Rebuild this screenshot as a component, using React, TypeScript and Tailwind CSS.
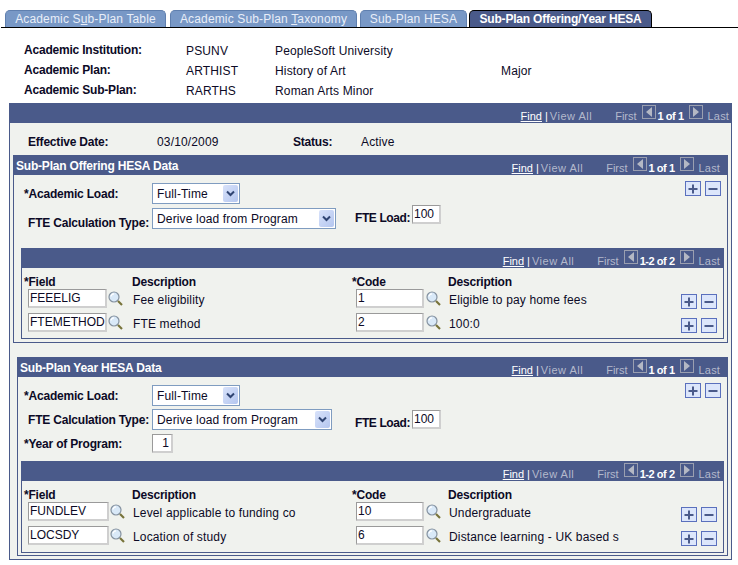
import React from "react"

const NAVY = "bg-[#4a5a8a]"
const BOLD = "font-bold tracking-[-0.2px]"

function ArrowBox({ dir }: { dir: "left" | "right" }) {
  return (
    <span className="mt-[2px] inline-flex h-[14px] w-[14px] items-center justify-center border border-[#9a9fb0]">
      <svg width="8" height="10" viewBox="0 0 8 10">
        <polygon points={dir === "left" ? "7,0 7,10 1,5" : "1,0 1,10 7,5"} fill="#b4b8c4" />
      </svg>
    </span>
  )
}

// Find | View All  First < 1 of 1 > Last
function NavBar({ count }: { count: string }) {
  return (
    <div className="flex h-[20px] items-start justify-end whitespace-nowrap text-[11px] leading-[20px] tracking-normal text-[#b4b9cc]">
      <span className="mt-[3px] text-white underline">Find</span>
      <span className="ml-[3px] mt-[3px] text-white">|</span>
      <span className="ml-[2px] mt-[3px] tracking-[0.5px]">View All</span>
      <span className="ml-[23px] mt-[3px]">First</span>
      <span className="ml-[5px] flex"><ArrowBox dir="left" /></span>
      <span className="ml-[2px] mt-[3px] font-bold tracking-[-0.45px] text-white">{count}</span>
      <span className="ml-[5px] flex"><ArrowBox dir="right" /></span>
      <span className="ml-[5px] mr-[3px] mt-[3px] tracking-[0.15px]">Last</span>
    </div>
  )
}

function Tab({ children, active, width }: { children: React.ReactNode; active?: boolean; width: string }) {
  return (
    <div
      className={
        active
          ? `h-[17px] ${width} -ml-[1px] rounded-t-[5px] border border-b-0 border-black ${NAVY} text-center text-[12px] font-bold leading-[17px] tracking-[-0.2px] text-white`
          : `h-[17px] ${width} rounded-t-[5px] border-t border-l border-r border-[#5f7fae] bg-[#7898c6] text-center text-[12px] leading-[17px] text-[#e8eef8]`
      }
    >
      {children}
    </div>
  )
}

function Select({ value, width }: { value: string; width: string }) {
  return (
    <div className={`flex h-[21px] ${width} items-center justify-between border border-[#7f9cc0] bg-white pl-[4px] pr-[1px] text-[12px]`}>
      <span>{value}</span>
      <span className="flex h-[17px] w-[15px] items-center justify-center rounded-[2px] bg-gradient-to-br from-[#d8e2fa] to-[#b4c6ef]">
        <svg width="9" height="7" viewBox="0 0 9 7">
          <path d="M1 1.5 L4.5 5 L8 1.5" fill="none" stroke="#2f4472" strokeWidth="2" />
        </svg>
      </span>
    </div>
  )
}

function TextBox({ value, width, right }: { value: string; width: string; right?: boolean }) {
  return (
    <input
      readOnly
      value={value}
      className={`h-[19px] ${width} border border-[#bdbdbd] border-t-[#9a9a9a] border-l-[#9a9a9a] border-r-2 border-b-2 border-r-[#cfcfcf] border-b-[#cfcfcf] bg-white pl-[1px] text-[12px] tracking-normal outline-none ${right ? "pr-[2px] text-right" : ""}`}
    />
  )
}

function Lookup() {
  return (
    <svg width="15" height="15" viewBox="0 0 15 15" className="shrink-0">
      <circle cx="6" cy="6" r="5" fill="#d9e9f8" stroke="#8592a0" strokeWidth="1.2" />
      <path d="M3 5.5 A3.2 3.2 0 0 1 6 2.8" fill="none" stroke="#ffffff" strokeWidth="1.2" />
      <path d="M10 10 L14 14" stroke="#77733a" strokeWidth="2.2" />
    </svg>
  )
}

function AddRemove() {
  return (
    <div className="flex gap-[4px]">
      <span className="flex h-[15px] w-[16px] items-center justify-center border border-[#5a70bd] bg-[#dce6fb]">
        <svg width="10" height="10" viewBox="0 0 10 10">
          <path d="M5 0.5 V9.5 M0.5 5 H9.5" stroke="#4a5a8a" strokeWidth="2" />
        </svg>
      </span>
      <span className="flex h-[15px] w-[16px] items-center justify-center border border-[#5a70bd] bg-[#dce6fb]">
        <svg width="10" height="10" viewBox="0 0 10 10">
          <path d="M0.5 5 H9.5" stroke="#4a5a8a" strokeWidth="2" />
        </svg>
      </span>
    </div>
  )
}

const COLS = "grid grid-cols-[111px_223px_92px_233px_1fr]"

interface GridRow {
  field: string
  fieldDesc: string
  code: string
  codeDesc: string
}

function FieldGrid({ rows, fieldWidth, height }: { rows: GridRow[]; fieldWidth: string; height: string }) {
  return (
    <div className={`${height} w-[703px] border border-[#4a5a8a]`}>
      <div className={`${NAVY} -mx-[1px] -mt-[1px]`}>
        <div className="pr-[1px]"><NavBar count="1-2 of 2" /></div>
      </div>
      <div className={`${COLS} h-[21px] items-end leading-[14px] ${BOLD}`}>
        <div className="pl-[2px]">*Field</div>
        <div className="-ml-[1px]">Description</div>
        <div className="-ml-[4px]">*Code</div>
        <div>Description</div>
        <div />
      </div>
      {rows.map((row) => (
        <div key={row.field} className={`${COLS} h-[24px] items-start`}>
          <div className="flex items-center gap-[1px] pl-[6px]">
            <TextBox value={row.field} width={fieldWidth} />
            <Lookup />
          </div>
          <div className="whitespace-nowrap pt-[2px] leading-[18px]">{row.fieldDesc}</div>
          <div className="flex items-center gap-[2px]">
            <TextBox value={row.code} width="w-[68px]" />
            <Lookup />
          </div>
          <div className="whitespace-nowrap pl-[1px] pt-[2px] leading-[18px]">{row.codeDesc}</div>
          <div className="pt-[5px]"><AddRemove /></div>
        </div>
      ))}
    </div>
  )
}

export default function App() {
  return (
    <div className="h-[565px] w-[738px] overflow-hidden bg-white font-['Liberation_Sans',Arial,sans-serif] text-[12px] tracking-[0.15px] text-[#0c0a26]">
      {/* tabs */}
      <div className="ml-[1px] flex h-[28px] items-end gap-[3px] border-b border-black pl-[4px]">
        <Tab width="mr-[1px] w-[161px]">Academic S<u>u</u>b-Plan Table</Tab>
        <Tab width="w-[187px]">Academic Sub-Plan <u>T</u>axonomy</Tab>
        <Tab width="w-[107px]">Sub-Plan HESA</Tab>
        <Tab active width="w-[183px]">Sub-Plan Offering/Year HESA</Tab>
      </div>

      {/* key fields */}
      <div className="mt-[13px] grid h-[62px] grid-cols-[162px_89px_226px_1fr] grid-rows-[20px_20px_20px] items-center pl-[24px] leading-[20px]">
        <div className={`-mt-[2px] ${BOLD}`}>Academic Institution:</div>
        <div>PSUNV</div>
        <div>PeopleSoft University</div>
        <div />
        <div className={`-mt-[2px] ${BOLD}`}>Academic Plan:</div>
        <div>ARTHIST</div>
        <div>History of Art</div>
        <div>Major</div>
        <div className={`-mt-[2px] ${BOLD}`}>Academic Sub-Plan:</div>
        <div>RARTHS</div>
        <div>Roman Arts Minor</div>
        <div />
      </div>

      {/* main scroll area */}
      <div className="ml-[9px] h-[457px] w-[723px] border border-[#4a5a8a] bg-[#f0f2ee]">
        <div className={`${NAVY} -mx-[1px] -mt-[1px]`}><NavBar count="1 of 1" /></div>

        <div className="flex h-[32px] items-center pl-[18px] pt-[6px]">
          <div className={`w-[129px] ${BOLD}`}>Effective Date:</div>
          <div className="w-[136px]">03/10/2009</div>
          <div className={`w-[68px] ${BOLD}`}>Status:</div>
          <div>Active</div>
        </div>

        {/* offering section */}
        <div className="ml-[3px] h-[188px] w-[715px] border border-[#4a5a8a]">
          <div className={`${NAVY} -mx-[1px] -mt-[1px] flex h-[20px] items-center justify-between pl-[3px] pr-[5px]`}>
            <span className={`pt-[1px] text-white ${BOLD}`}>Sub-Plan Offering HESA Data</span>
            <div className="w-[300px]"><NavBar count="1 of 1" /></div>
          </div>
          <div className="flex h-[30px] items-start pl-[10px] pr-[6px]">
            <div className={`w-[128px] pt-[11px] leading-[16px] ${BOLD}`}>*Academic Load:</div>
            <div className="pt-[8px]"><Select value="Full-Time" width="w-[88px]" /></div>
            <div className="ml-auto pt-[6px]"><AddRemove /></div>
          </div>
          <div className="flex h-[43px] items-start pl-[14px]">
            <div className={`w-[124px] whitespace-nowrap pt-[10px] leading-[16px] ${BOLD}`}>FTE Calculation Type:</div>
            <div className="pt-[3px]"><Select value="Derive load from Program" width="w-[184px]" /></div>
            <div className="ml-[19px] w-[57px] whitespace-nowrap pt-[5px] font-bold leading-[16px] tracking-[-0.4px]">FTE Load:</div>
            <TextBox value="100" width="w-[29px]" />
          </div>
          <div className="ml-[7px]">
            <FieldGrid
              height="h-[91px]"
              fieldWidth="w-[79px]"
              rows={[
                { field: "FEEELIG", fieldDesc: "Fee eligibility", code: "1", codeDesc: "Eligible to pay home fees" },
                { field: "FTEMETHOD", fieldDesc: "FTE method", code: "2", codeDesc: "100:0" },
              ]}
            />
          </div>
        </div>

        {/* year section */}
        <div className="ml-[7px] mt-[14px] h-[199px] w-[711px] border border-[#4a5a8a]">
          <div className={`${NAVY} -mx-[1px] -mt-[1px] flex h-[20px] items-center justify-between pl-[3px] pr-[5px]`}>
            <span className={`pt-[1px] text-white ${BOLD}`}>Sub-Plan Year HESA Data</span>
            <div className="w-[300px]"><NavBar count="1 of 1" /></div>
          </div>
          <div className="flex h-[30px] items-start pl-[6px] pr-[6px]">
            <div className={`w-[128px] pt-[11px] leading-[16px] ${BOLD}`}>*Academic Load:</div>
            <div className="pt-[8px]"><Select value="Full-Time" width="w-[88px]" /></div>
            <div className="ml-auto pt-[6px]"><AddRemove /></div>
          </div>
          <div className="flex h-[26px] items-start pl-[10px]">
            <div className={`w-[124px] whitespace-nowrap pt-[5px] leading-[16px] ${BOLD}`}>FTE Calculation Type:</div>
            <div className="pt-[2px]"><Select value="Derive load from Program" width="w-[180px]" /></div>
            <div className="ml-[23px] w-[57px] whitespace-nowrap pt-[8px] font-bold leading-[16px] tracking-[-0.4px]">FTE Load:</div>
            <div className="pt-[3px]"><TextBox value="100" width="w-[29px]" /></div>
          </div>
          <div className="flex h-[28px] items-start pl-[6px]">
            <div className={`w-[128px] pt-[3px] leading-[16px] ${BOLD}`}>*Year of Program:</div>
            <div className="pt-[1px]"><TextBox value="1" width="w-[21px]" right /></div>
          </div>
          <div className="ml-[3px]">
            <FieldGrid
              height="h-[92px]"
              fieldWidth="w-[81px]"
              rows={[
                { field: "FUNDLEV", fieldDesc: "Level applicable to funding co", code: "10", codeDesc: "Undergraduate" },
                { field: "LOCSDY", fieldDesc: "Location of study", code: "6", codeDesc: "Distance learning - UK based s" },
              ]}
            />
          </div>
        </div>
      </div>
    </div>
  )
}
